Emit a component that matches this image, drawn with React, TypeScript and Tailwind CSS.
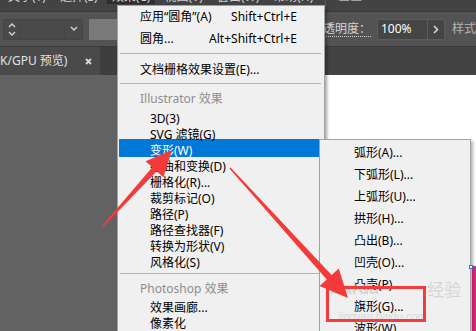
import React from "react";

const font = "font-['Noto_Sans','Noto_Sans_CJK_SC',sans-serif]";

type Pt = [number, number];

// tapered annotation arrow: thin tail, wide triangular head
function arrowPoints(t: Pt, p: Pt, headLen: number, headHalf: number, tailHalf: number, neckHalf: number) {
  const dx = p[0] - t[0];
  const dy = p[1] - t[1];
  const len = Math.hypot(dx, dy);
  const ux = dx / len;
  const uy = dy / len;
  const nx = -uy;
  const ny = ux;
  const bx = p[0] - ux * headLen;
  const by = p[1] - uy * headLen;
  const pts: Pt[] = [
    [t[0] + nx * tailHalf, t[1] + ny * tailHalf],
    [bx + nx * neckHalf, by + ny * neckHalf],
    [bx + nx * headHalf, by + ny * headHalf],
    p,
    [bx - nx * headHalf, by - ny * headHalf],
    [bx - nx * neckHalf, by - ny * neckHalf],
    [t[0] - nx * tailHalf, t[1] - ny * tailHalf],
  ];
  return pts.map(([x, y]) => `${x.toFixed(1)},${y.toFixed(1)}`).join(" ");
}

function Sep({ top, bottom }: { top: string; bottom: string }) {
  return <div className={`${top} ${bottom} ml-px -mr-px h-px bg-[#b4b4b4]`} />;
}

function Item({ label, hl }: { label: string; hl?: boolean }) {
  if (hl) {
    return (
      <div className="-mt-[4px] mb-[2px] h-[18px] pt-[4px] pl-[31px] leading-[16px] bg-[#0078d7] text-white whitespace-nowrap">
        {label}
      </div>
    );
  }
  return <div className="h-[16px] pl-[31px] leading-[16px] whitespace-nowrap">{label}</div>;
}

function MainMenu() {
  const fx = [
    "3D(3)",
    "SVG 滤镜(G)",
    "变形(W)",
    "扭曲和变换(D)",
    "栅格化(R)...",
    "裁剪标记(O)",
    "路径(P)",
    "路径查找器(F)",
    "转换为形状(V)",
    "风格化(S)",
  ];
  return (
    <div className="absolute left-[117px] top-[5px] w-[208px] h-[340px] bg-[#f0f0f0] border border-[#a3a3a3] shadow-[2px_2px_3px_rgba(0,0,0,0.35)] pl-px pr-[4px] text-[12px] text-black">
      <div className="h-[22px] flex items-center justify-between pl-[21px] pr-[23px] whitespace-nowrap">
        <span>应用“圆角”(A)</span>
        <span>Shift+Ctrl+E</span>
      </div>
      <div className="h-[22px] flex items-center justify-between pl-[21px] pr-[23px] whitespace-nowrap">
        <span>圆角...</span>
        <span>Alt+Shift+Ctrl+E</span>
      </div>
      <Sep top="mt-[3px]" bottom="mb-[5px]" />
      <div className="h-[22px] flex items-center pl-[21px] whitespace-nowrap">文档栅格效果设置(E)...</div>
      <Sep top="mt-[2px]" bottom="mb-[6px]" />
      <div className="h-[17px] mb-[4px] flex items-center pl-[21px] text-[#8e8e8e] whitespace-nowrap">
        Illustrator 效果
      </div>
      {fx.map((f) => (
        <Item key={f} label={f} hl={f === "变形(W)"} />
      ))}
      <Sep top="mt-[2px]" bottom="mb-[6px]" />
      <div className="h-[17px] mb-[3px] flex items-center pl-[21px] text-[#8e8e8e] whitespace-nowrap">
        Photoshop 效果
      </div>
      <Item label="效果画廊..." />
      <Item label="像素化" />
    </div>
  );
}

function SubMenu() {
  const items = [
    "弧形(A)...",
    "下弧形(L)...",
    "上弧形(U)...",
    "拱形(H)...",
    "凸出(B)...",
    "凹壳(O)...",
    "凸壳(P)...",
    "旗形(G)...",
    "波形(W)...",
  ];
  return (
    <div className="absolute left-[319px] top-[139px] w-[152px] h-[210px] bg-[#f0f0f0] border border-[#a3a3a3] shadow-[2px_2px_3px_rgba(0,0,0,0.3)] pt-[2px] text-[12px] text-black">
      {items.map((i) => (
        <div key={i} className="h-[22px] flex items-center pl-[34px] whitespace-nowrap">
          {i}
        </div>
      ))}
    </div>
  );
}

function Chevron({ d }: { d: string }) {
  return (
    <svg width="8" height="6" viewBox="0 0 8 6" aria-hidden="true">
      <path d={d} fill="none" stroke="#d6d6d6" strokeWidth="1.4" />
    </svg>
  );
}

export default function App() {
  return (
    <div className={`relative w-[476px] h-[331px] overflow-hidden bg-[#535353] ${font}`}>
      {/* top menu bar, mostly cut off */}
      <div className="h-[12px] bg-[#434343] border-b border-[#383838] overflow-hidden flex text-[12px] text-[#d0d0d0]">
        <div className="-mt-[10px] flex items-start leading-[14px] whitespace-nowrap">
          <span className="ml-[8px]">文字(T)</span>
          <span className="ml-[14px]">选择(S)</span>
          <span className="ml-[9px] px-[5px] bg-[#2e2e2e]">效果(C)</span>
          <span className="ml-[9px]">视图(V)</span>
          <span className="ml-[14px]">窗口(W)</span>
          <span className="ml-[14px]">帮助(H)</span>
          <span className="ml-[12px] w-px h-[24px] bg-[#5a5a5a]" />
          <span className="ml-[12px]">▦▦</span>
        </div>
      </div>

      {/* control bar */}
      <div className="h-[34px] flex items-center text-[12px] text-[#d4d4d4]">
        <div className="ml-[3px] flex h-[21px] rounded-[2px] border border-[#454545] bg-[#4a4a4a]">
          <div className="w-[16px] flex flex-col items-center justify-center gap-[3px] border-r border-[#454545]">
            <Chevron d="M1 5L4 2L7 5" />
            <Chevron d="M1 1L4 4L7 1" />
          </div>
          <div className="w-[45px] border-r border-[#454545]" />
          <div className="w-[17px] flex items-center justify-center">
            <Chevron d="M1 1L4 4L7 1" />
          </div>
        </div>
        <div className="ml-[6px] w-[60px] h-[21px] bg-[#7a7a7a]" />
        <div className="ml-[165px] border-b border-dotted border-[#cfcfcf] leading-[14px] whitespace-nowrap">
          不透明度：
        </div>
        <div className="ml-[6px] flex h-[21px] rounded-[2px] border border-[#5c5c5c] bg-[#454545]">
          <div className="w-[49px] pl-[3px] flex items-center text-white">100%</div>
          <div className="w-[17px] border-l border-[#5c5c5c] flex items-center justify-center text-[#dcdcdc]">
            <svg width="6" height="9" viewBox="0 0 6 9" aria-hidden="true">
              <path d="M1 1L4.5 4.5L1 8" fill="none" stroke="#dcdcdc" strokeWidth="1.5" />
            </svg>
          </div>
        </div>
        <div className="ml-[7px] text-[#b4b4b4] whitespace-nowrap">样式</div>
      </div>

      {/* document tabs */}
      <div className="h-[29px] flex bg-[#434343] border-t border-[#3a3a3a]">
        <div className="w-[100px] bg-[#4a4a4a] flex items-center justify-between pr-[8px] text-[12px] text-[#e2e2e2]">
          <span className="whitespace-nowrap">K/GPU 预览)</span>
          <svg width="7" height="7" viewBox="0 0 7 7" aria-hidden="true">
            <path d="M1 1L6 6M6 1L1 6" stroke="#d8d8d8" strokeWidth="1.8" />
          </svg>
        </div>
        <div className="w-[17px] bg-[#3e3e3e]" />
      </div>

      {/* work area */}
      <div className="h-[256px] flex">
        <div className="w-[117px] bg-[#626262]" />
        <div className="flex-1 bg-white flex justify-end">
          <div className="mt-[191px] w-[4px] bg-[#e2287e]" />
        </div>
      </div>

      <MainMenu />
      <SubMenu />

      {/* selection handle peeking out */}
      <div className="absolute left-[469px] top-[265px] w-[4px] h-[4px] border border-[#3b6fd0] bg-white" />

      {/* watermark */}
      <div className="absolute left-[330px] top-[280px] flex items-end text-[#d6d6d6] whitespace-nowrap pointer-events-none">
        <span className="text-[17px] font-bold leading-[18px] font-['Liberation_Sans',sans-serif]">Bai</span>
        <span className="ml-[2px] text-[17px] font-bold leading-[18px] font-['Liberation_Sans',sans-serif]">du</span>
        <span className="ml-[48px] text-[17px] leading-[18px] font-['Noto_Sans_CJK_SC',sans-serif]">经验</span>
      </div>
      <div className="absolute left-[338px] top-[310px] text-[11px] leading-[12px] text-[#dadada] font-['Liberation_Sans',sans-serif] pointer-events-none">
        jingyan.baidu.com
      </div>

      {/* red annotation box */}
      <div className="absolute left-[326px] top-[286px] w-[100px] h-[36px] border-[3px] border-[#f23b3b]" />

      {/* red arrows */}
      <svg className="absolute left-0 top-0 pointer-events-none" width="476" height="331" aria-hidden="true">
        <polygon points={arrowPoints([103, 226], [172, 150], 26, 12, 0.8, 3)} fill="#f23b3b" />
        <polygon points={arrowPoints([230, 168], [348, 298], 28, 13, 0.8, 3.2)} fill="#f23b3b" />
      </svg>
    </div>
  );
}
